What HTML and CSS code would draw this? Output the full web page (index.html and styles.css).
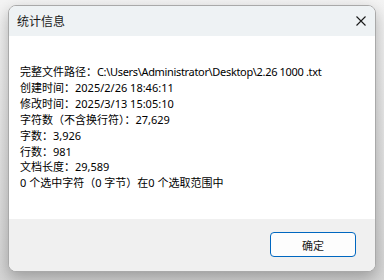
FILE: index.html
```html
<!DOCTYPE html>
<html lang="zh-CN">
<head>
  <meta charset="UTF-8">
  <title>统计信息</title>
  <link rel="stylesheet" href="styles.css">
</head>
<body>
  <div class="dialog">
    <div class="titlebar">
      <span class="title">统计信息</span>
      <button class="close" aria-label="关闭">
        <svg width="10" height="10" viewBox="0 0 10 10"><path d="M0.5 0.5 L9.5 9.5 M9.5 0.5 L0.5 9.5" stroke="#1a1a1a" stroke-width="1.1" fill="none"/></svg>
      </button>
    </div>
    <div class="content">
      <p>完整文件路径：<span class="path">C:\Users\Administrator\Desktop\2.26 1000 .txt</span></p>
      <p>创建时间：2025/2/26 18:46:11</p>
      <p>修改时间：2025/3/13 15:05:10</p>
      <p>字符数（不含换行符）：27,629</p>
      <p>字数：3,926</p>
      <p>行数：981</p>
      <p>文档长度：29,589</p>
      <p>0 个选中字符（0 字节）在0 个选取范围中</p>
    </div>
    <div class="footer">
      <button class="ok">确定</button>
    </div>
  </div>
</body>
</html>
```

FILE: styles.css
```css
html, body { margin: 0; padding: 0; }
body {
  width: 384px; height: 280px; overflow: hidden;
  background: linear-gradient(#f4f4f4, #d6d6d6);
  font-family: "Noto Sans", "Noto Sans CJK SC", sans-serif;
  font-size: 11px; color: #000;
}
.dialog {
  margin: 5px 8px 0 8px; height: 267px; box-sizing: border-box;
  border: 1px solid #a9a9a9; border-radius: 8px; overflow: hidden;
  display: flex; flex-direction: column;
  box-shadow: 0 6px 16px rgba(0,0,0,0.28);
  background: #fff;
}
.titlebar {
  height: 30px; background: #eef2f4; flex: none;
  display: flex; align-items: center; justify-content: space-between;
  padding: 0 9px 0 8px;
}
.title { font-size: 12px; color: #1a1a1a; }
.close { border: none; background: none; padding: 0; width: 10px; height: 10px; display: flex; }
.content { flex: 1; padding: 28px 11px 0 11px; }
.content p { margin: 0; line-height: 15.9px; white-space: nowrap; }
.path { letter-spacing: -0.33px; }
.footer {
  height: 52px; flex: none; background: #f0f0f0;
  display: flex; justify-content: flex-end; align-items: flex-start;
  padding: 13px 19px 0 0; box-sizing: border-box;
}
.ok {
  width: 86px; height: 25px; box-sizing: border-box;
  border: 1px solid #0067c0; border-radius: 4px; background: #fdfdfd;
  font-family: "Noto Sans CJK SC", sans-serif; font-size: 11px; color: #1a1a1a; padding: 0;
}
```
